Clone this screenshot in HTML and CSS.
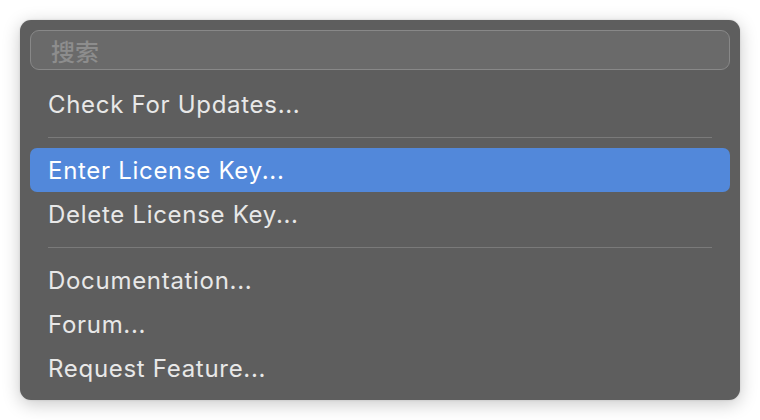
FILE: index.html
```html
<!DOCTYPE html>
<html lang="en">
<head>
<meta charset="utf-8">
<title>Menu</title>
<link rel="stylesheet" href="styles.css">
</head>
<body>
<div class="menu">
  <div class="search"><span class="placeholder">搜索</span></div>
  <ul class="items">
    <li class="item">Check For Updates...</li>
    <li class="sep"></li>
    <li class="item active">Enter License Key...</li>
    <li class="item">Delete License Key...</li>
    <li class="sep"></li>
    <li class="item">Documentation...</li>
    <li class="item">Forum...</li>
    <li class="item">Request Feature...</li>
  </ul>
</div>
</body>
</html>
```
FILE: styles.css
```css
html, body {
  margin: 0;
  padding: 0;
  background: #ffffff;
}
body {
  width: 760px;
  height: 420px;
  padding: 20px;
  box-sizing: border-box;
  font-family: Inter, "Noto Sans", "Noto Sans CJK SC", sans-serif;
}
.menu {
  width: 720px;
  height: 380px;
  box-sizing: border-box;
  padding: 10px;
  background: #5e5e5e;
  border-radius: 11px;
  box-shadow: 0 4px 18px rgba(0, 0, 0, 0.22), 0 0 2px rgba(0, 0, 0, 0.15);
  display: flex;
  flex-direction: column;
}
.search {
  height: 40px;
  box-sizing: border-box;
  border: 1px solid #888888;
  border-radius: 9px;
  background: #6a6a6a;
  display: flex;
  align-items: center;
  padding-left: 20px;
}
.placeholder {
  font-family: "Noto Sans CJK SC", sans-serif;
  font-size: 24px;
  font-weight: 500;
  color: #8d8d8d;
  line-height: 1;
  margin-top: 1px;
}
.items {
  list-style: none;
  margin: 12px 0 0;
  padding: 0;
  display: flex;
  flex-direction: column;
}
.item {
  height: 44px;
  display: flex;
  align-items: center;
  padding-left: 18px;
  border-radius: 7px;
  font-size: 24px;
  color: #e8e8e8;
  letter-spacing: 0.7px;
}
.item.active {
  background: #5288da;
  color: #ffffff;
}
.sep {
  height: 22px;
  display: flex;
  align-items: center;
  padding: 0 18px;
}
.sep::before {
  content: "";
  flex: 1;
  height: 1px;
  background: #7a7a7a;
  margin-top: 1px;
}
```
